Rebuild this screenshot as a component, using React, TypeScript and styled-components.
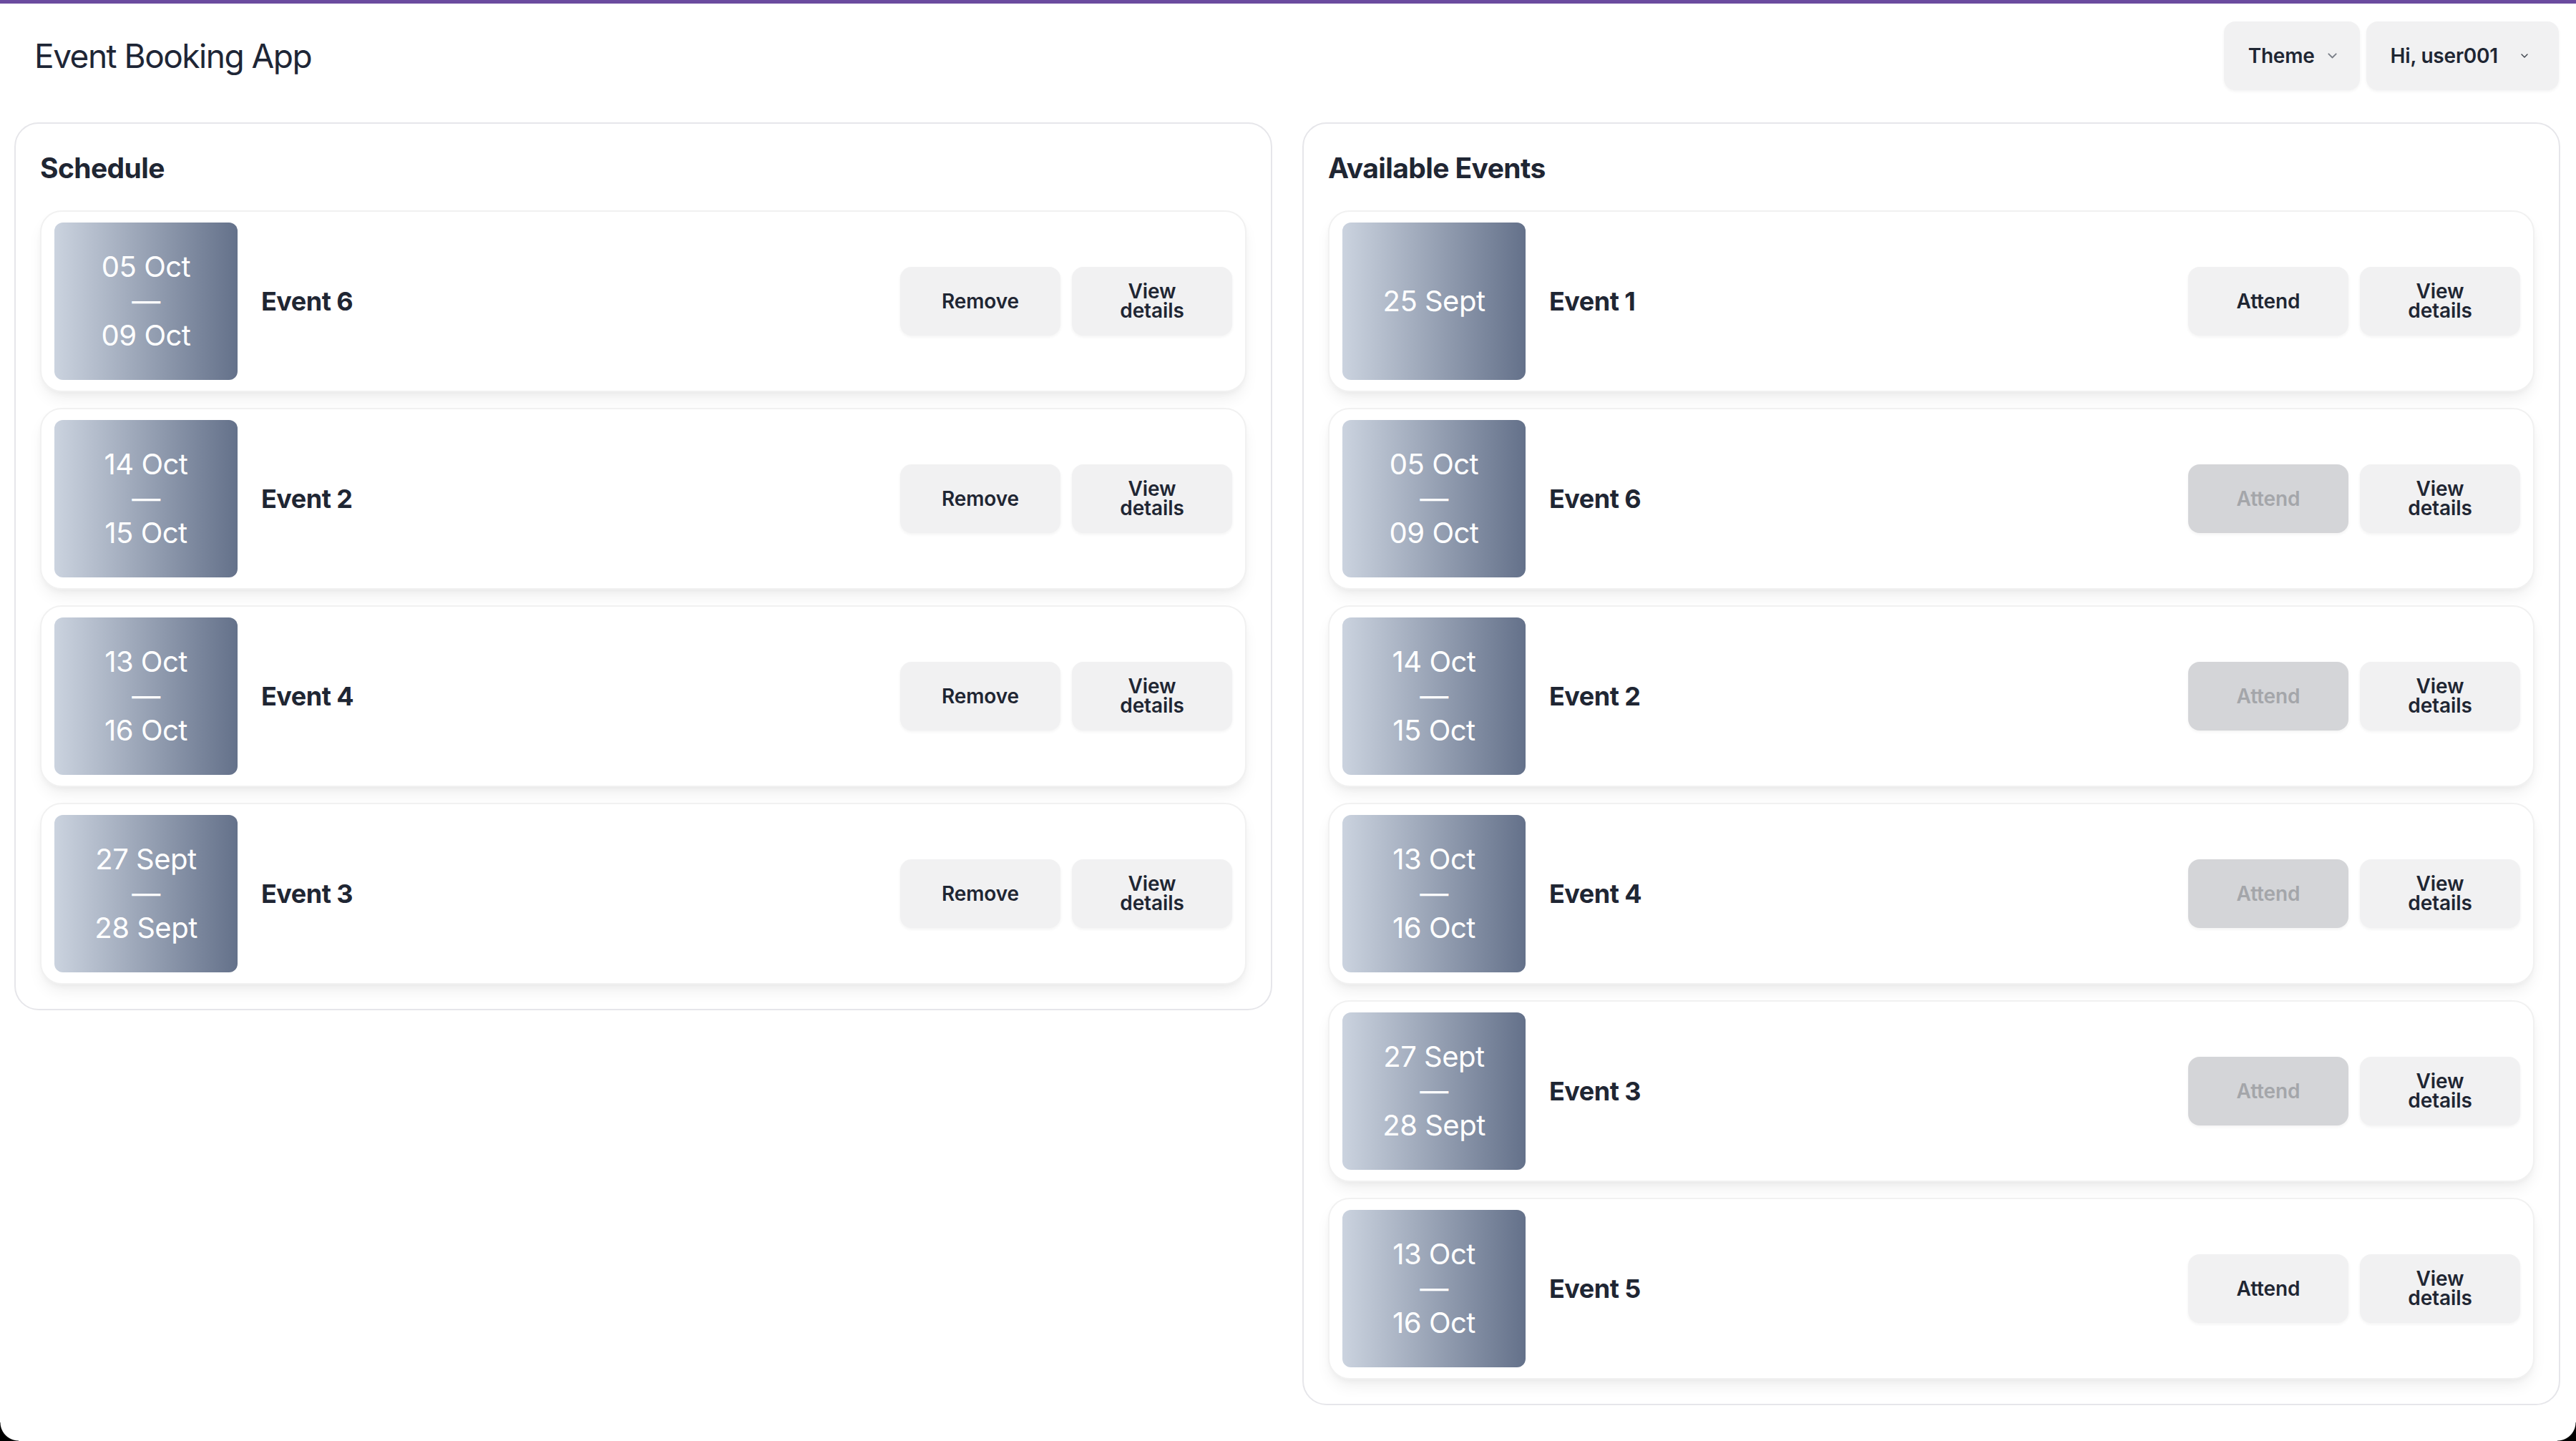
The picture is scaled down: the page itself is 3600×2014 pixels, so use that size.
import React from "react";
import styled, { createGlobalStyle } from "styled-components";

const GlobalStyle = createGlobalStyle`
  html, body {
    margin: 0;
    padding: 0;
    background: #ffffff;
    font-family: Inter, "Noto Sans", "Liberation Sans", sans-serif;
    color: #1f2633;
  }
  * { box-sizing: border-box; }
`;

const Page = styled.div`
  min-height: 2014px;
  display: flex;
  flex-direction: column;
  background: #ffffff;
`;

const TopBar = styled.div`
  height: 5px;
  background: #6b4b9f;
`;

const Header = styled.header`
  display: flex;
  align-items: center;
  justify-content: space-between;
  padding: 25px 24px 0 48px;
`;

const AppTitle = styled.h1`
  margin: 0;
  font-size: 46px;
  font-weight: 400;
  letter-spacing: -1.5px;
  color: #1e2636;
`;

const HeaderActions = styled.div`
  display: flex;
  gap: 9px;
`;

const MenuButton = styled.button<{ $gap: number; $padRight: number }>`
  height: 96px;
  display: flex;
  align-items: center;
  gap: ${(p) => p.$gap}px;
  padding: 0 ${(p) => p.$padRight}px 0 34px;
  border: none;
  border-radius: 16px;
  background: #f1f1f2;
  box-shadow: 0 2px 4px rgba(0, 0, 0, 0.05);
  font-family: inherit;
  font-size: 28px;
  font-weight: 600;
  letter-spacing: -0.2px;
  color: #1f2633;
`;

const Main = styled.main`
  display: grid;
  grid-template-columns: 1fr 1fr;
  gap: 42px;
  align-items: start;
  padding: 45px 22px 0 20px;
`;

const Panel = styled.section`
  border: 2px solid #e6e6ea;
  border-radius: 34px;
  padding: 34px;
  background: #ffffff;
`;

const PanelTitle = styled.h2`
  margin: 0 0 31px 0;
  font-size: 39px;
  line-height: 56px;
  font-weight: 700;
  letter-spacing: -0.6px;
  color: #1f2633;
`;

const CardList = styled.div`
  display: flex;
  flex-direction: column;
  gap: 22px;
`;

const Card = styled.article`
  display: flex;
  align-items: center;
  gap: 33px;
  padding: 15px 18px;
  border: 2px solid #f1f1f1;
  border-radius: 30px;
  background: #ffffff;
  box-shadow: 0 12px 22px -4px rgba(0, 0, 0, 0.07), 0 4px 8px -2px rgba(0, 0, 0, 0.04);
`;

const DateBox = styled.div`
  width: 256px;
  height: 220px;
  flex: none;
  border-radius: 12px;
  background: linear-gradient(to right, #cbd3df, #64718a);
  display: flex;
  flex-direction: column;
  align-items: center;
  justify-content: center;
  color: #ffffff;
  font-size: 40px;
  line-height: 48px;
  font-weight: 400;
  letter-spacing: -0.5px;
`;

const EventName = styled.h3`
  margin: 0;
  flex: 1;
  font-size: 36px;
  font-weight: 700;
  letter-spacing: -0.5px;
  color: #1f2633;
`;

const Actions = styled.div`
  display: flex;
  gap: 16px;
`;

const ActionButton = styled.button<{ disabled?: boolean }>`
  width: 224px;
  height: 96px;
  display: flex;
  align-items: center;
  justify-content: center;
  border: none;
  border-radius: 16px;
  background: ${(p) => (p.disabled ? "#d4d5d8" : "#f1f1f2")};
  color: ${(p) => (p.disabled ? "#a4a6aa" : "#1f2633")};
  box-shadow: 0 2px 4px rgba(0, 0, 0, 0.05);
  font-family: inherit;
  font-size: 28px;
  line-height: 27px;
  font-weight: 600;
  letter-spacing: -0.1px;
  text-align: center;
`;

const WrapLabel = styled.span`
  display: block;
  width: min-content;
`;

const Corner = styled.div<{ $side: "left" | "right" }>`
  position: fixed;
  bottom: 0;
  ${(p) => p.$side}: 0;
  width: 26px;
  height: 26px;
  pointer-events: none;
  background: ${(p) =>
    p.$side === "left"
      ? "radial-gradient(circle at 100% 0%, transparent 25px, #000 26px)"
      : "radial-gradient(circle at 0% 0%, transparent 25px, #000 26px)"};
`;

const Chevron = ({ size, color }: { size: number; color: string }) => (
  <svg width={size} height={size * 0.6} viewBox="0 0 10 6" fill="none">
    <path d="M1 1l4 4 4-4" stroke={color} strokeWidth="1.4" strokeLinecap="round" strokeLinejoin="round" />
  </svg>
);

type Ev = { name: string; start: string; end?: string; disabled?: boolean };

const schedule: Ev[] = [
  { name: "Event 6", start: "05 Oct", end: "09 Oct" },
  { name: "Event 2", start: "14 Oct", end: "15 Oct" },
  { name: "Event 4", start: "13 Oct", end: "16 Oct" },
  { name: "Event 3", start: "27 Sept", end: "28 Sept" },
];

const available: Ev[] = [
  { name: "Event 1", start: "25 Sept" },
  { name: "Event 6", start: "05 Oct", end: "09 Oct", disabled: true },
  { name: "Event 2", start: "14 Oct", end: "15 Oct", disabled: true },
  { name: "Event 4", start: "13 Oct", end: "16 Oct", disabled: true },
  { name: "Event 3", start: "27 Sept", end: "28 Sept", disabled: true },
  { name: "Event 5", start: "13 Oct", end: "16 Oct" },
];

const EventCard = ({ ev, action }: { ev: Ev; action: string }) => (
  <Card>
    <DateBox>
      <span>{ev.start}</span>
      {ev.end && <span>—</span>}
      {ev.end && <span>{ev.end}</span>}
    </DateBox>
    <EventName>{ev.name}</EventName>
    <Actions>
      <ActionButton disabled={ev.disabled}>{action}</ActionButton>
      <ActionButton>
        <WrapLabel>View details</WrapLabel>
      </ActionButton>
    </Actions>
  </Card>
);

export default function App() {
  return (
    <>
      <GlobalStyle />
      <Page>
        <TopBar />
        <Header>
          <AppTitle>Event Booking App</AppTitle>
          <HeaderActions>
            <MenuButton $gap={18} $padRight={32}>
              Theme <Chevron size={13} color="#7a7f88" />
            </MenuButton>
            <MenuButton $gap={32} $padRight={43}>
              Hi, user001 <Chevron size={10} color="#3a404a" />
            </MenuButton>
          </HeaderActions>
        </Header>
        <Main>
          <Panel>
            <PanelTitle>Schedule</PanelTitle>
            <CardList>
              {schedule.map((ev) => (
                <EventCard key={ev.name} ev={ev} action="Remove" />
              ))}
            </CardList>
          </Panel>
          <Panel>
            <PanelTitle>Available Events</PanelTitle>
            <CardList>
              {available.map((ev) => (
                <EventCard key={ev.name} ev={ev} action="Attend" />
              ))}
            </CardList>
          </Panel>
        </Main>
        <Corner $side="left" />
        <Corner $side="right" />
      </Page>
    </>
  );
}
